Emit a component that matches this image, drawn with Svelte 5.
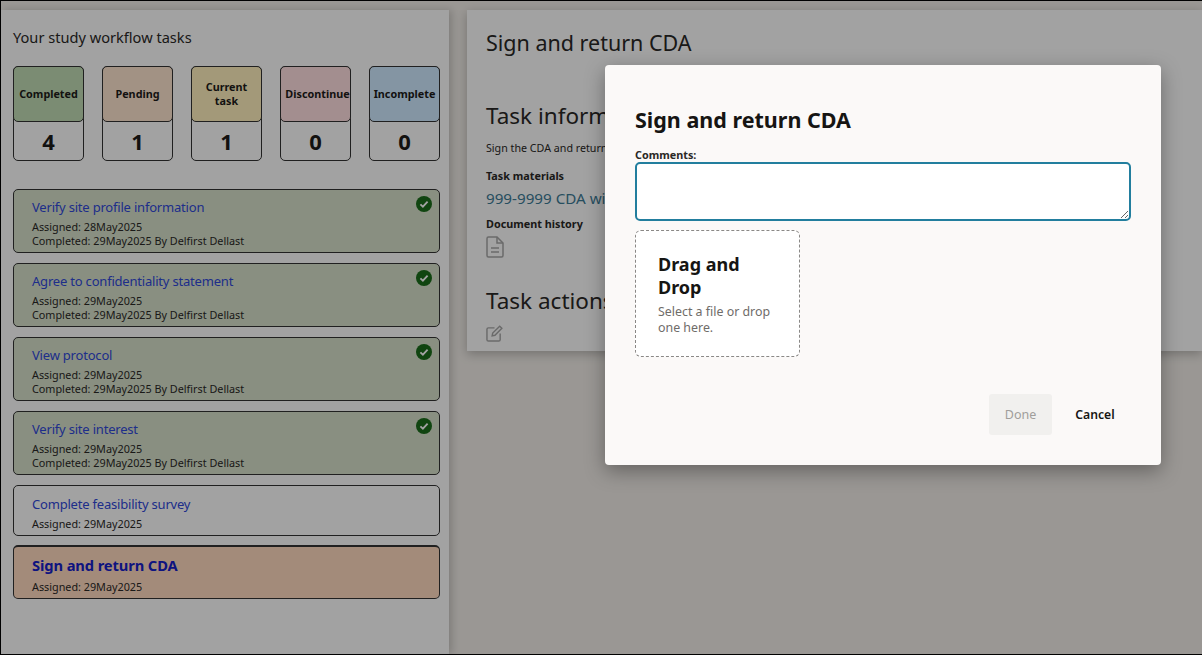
<script>
  const stats = [
    { label: 'Completed', value: 4, tone: 'green' },
    { label: 'Pending', value: 1, tone: 'peach' },
    { label: 'Current task', value: 1, tone: 'yellow' },
    { label: 'Discontinue', value: 0, tone: 'pink' },
    { label: 'Incomplete', value: 0, tone: 'blue' }
  ];
  const tasks = [
    { title: 'Verify site profile information', assigned: '28May2025', done: true },
    { title: 'Agree to confidentiality statement', assigned: '29May2025', done: true },
    { title: 'View protocol', assigned: '29May2025', done: true },
    { title: 'Verify site interest', assigned: '29May2025', done: true },
    { title: 'Complete feasibility survey', assigned: '29May2025', done: false },
    { title: 'Sign and return CDA', assigned: '29May2025', done: false, current: true }
  ];
</script>

<div class="frame">
  <div class="page">
    <aside class="left">
      <h2>Your study workflow tasks</h2>
      <div class="stats">
        {#each stats as s}
          <div class="stat">
            <div class="stat-head {s.tone}">{s.label}</div>
            <div class="stat-value">{s.value}</div>
          </div>
        {/each}
      </div>
      <div class="tasks">
        {#each tasks as t}
          <div class="task" class:done={t.done} class:current={t.current}>
            <div class="task-title">{t.title}</div>
            <div class="meta">Assigned: {t.assigned}</div>
            {#if t.done}
              <div class="meta">Completed: 29May2025 By Delfirst Dellast</div>
              <svg class="check" viewBox="0 0 16 16" width="16" height="16">
                <circle cx="8" cy="8" r="8" fill="#1a6c1a" />
                <path d="M4.400 8.300l2.500 2.400 4.700-5" fill="none" stroke="#fff" stroke-width="1.800" />
              </svg>
            {/if}
          </div>
        {/each}
      </div>
    </aside>
    <main class="right">
      <h1>Sign and return CDA</h1>
      <h3 class="info">Task information</h3>
      <p class="desc">Sign the CDA and return it to the sponsor for review.</p>
      <div class="label first">Task materials</div>
      <div class="link">999-9999 CDA with sponsor</div>
      <div class="label second">Document history</div>
      <svg class="doc" viewBox="0 0 18 22" width="18" height="22" fill="none" stroke="#a6a6a6" stroke-width="1.500">
        <path d="M2.500 1h8.500l6 6v12.500a1.500 1.500 0 0 1-1.500 1.500h-13a1.500 1.500 0 0 1-1.500-1.500v-17a1.500 1.500 0 0 1 1.500-1.500z" />
        <path d="M11 1v6h6M5 12h8M5 16h8" />
      </svg>
      <h3 class="actions">Task actions</h3>
      <svg class="edit" viewBox="0 0 18 18" width="17" height="17" fill="none" stroke="#a6a6a6" stroke-width="1.500">
        <path d="M9 3H2.500A1.500 1.500 0 0 0 1 4.500v11A1.500 1.500 0 0 0 2.500 17h11a1.500 1.500 0 0 0 1.500-1.500V9" />
        <path d="M6.500 11.500l.6-3L14.500 1.200l2.300 2.300L9.500 10.900z" />
      </svg>
    </main>
  </div>
  <div class="scrim"></div>
  <div class="modal">
    <h4>Sign and return CDA</h4>
    <label class="c-label" for="comments">Comments:</label>
    <textarea id="comments"></textarea>
    <div class="drop">
      <div class="drop-title">Drag and Drop</div>
      <div class="drop-sub">Select a file or drop one here.</div>
    </div>
    <div class="buttons">
      <button class="btn-done" disabled>Done</button>
      <button class="btn-cancel">Cancel</button>
    </div>
  </div>
</div>

<style>
  :global(body) { margin: 0; }
  .frame {
    position: relative;
    width: 1202px;
    height: 655px;
    box-sizing: border-box;
    overflow: hidden;
    border: solid #000;
    border-width: 1px 0 1px 1px;
    font-family: "Noto Sans", "Open Sans", sans-serif;
    color: #2a2826;
    background: #f1ede8;
  }
  .page {
    display: flex;
    align-items: flex-start;
    gap: 18px;
    padding-top: 9px;
    height: 100%;
    box-sizing: border-box;
  }
  .left {
    width: 448px;
    height: 644px;
    flex: none;
    box-sizing: border-box;
    padding: 17px 9px 0 12px;
    background: #fdfdfd;
    box-shadow: 3px 0 8px rgba(0, 0, 0, 0.18);
  }
  h2 { margin: 0; font-size: 14.600px; font-weight: 400; line-height: 20px; }
  .stats { display: flex; gap: 18px; margin-top: 19px; }
  .stat {
    width: 71px;
    height: 95px;
    box-sizing: border-box;
    border: 1px solid #333;
    border-radius: 5px;
    background: #fdfdfd;
  }
  .stat-head {
    height: 56px;
    box-sizing: border-box;
    margin: -1px -1px 0;
    border: 1px solid #333;
    border-radius: 5px;
    display: flex;
    align-items: center;
    justify-content: center;
    text-align: center;
    font-size: 10.800px;
    font-weight: 700;
    line-height: 14px;
    color: #1d1b19;
  }
  .green { background: #c1dcb4; }
  .peach { background: #fde4cf; }
  .yellow { background: #fff0bd; padding: 0 10px; }
  .pink { background: #ffdfe0; padding-left: 4px; }
  .blue { background: #cfe9ff; }
  .stat-value { text-align: center; font-size: 22px; font-weight: 700; line-height: 38px; color: #1d1b19; }
  .tasks { display: flex; flex-direction: column; gap: 10px; margin-top: 28px; }
  .task {
    position: relative;
    box-sizing: border-box;
    width: 427px;
    padding: 9px 18px 0;
    min-height: 51px;
    border: 1px solid #333;
    border-radius: 5px;
    background: #fdfdfd;
  }
  .task.done { height: 64px; padding-top: 8px; background: #d6e0ca; }
  .task.current { height: 54px; margin-top: -1px; background: #ffd9bf; border-top-width: 2px; padding-top: 8px; }
  .task-title { font-size: 13px; letter-spacing: -0.2px; line-height: 18px; color: #3048d8; margin-bottom: 4px; }
  .task.current .task-title { font-size: 14.700px; letter-spacing: -0.1px; font-weight: 700; color: #1520c8; line-height: 21px; }
  .meta { font-size: 10.800px; line-height: 14px; }
  .check { position: absolute; top: 6px; right: 7px; }
  .right {
    flex: 1;
    height: 341px;
    box-sizing: border-box;
    padding: 19px 19px;
    background: #fdfdfd;
    box-shadow: 0 3px 10px rgba(0, 0, 0, 0.25);
    white-space: nowrap;
    overflow: hidden;
  }
  h1 { margin: 0; font-size: 21.500px; font-weight: 400; line-height: 28px; }
  h3 { margin: 0; font-size: 22.500px; font-weight: 400; line-height: 28px; }
  .info { margin-top: 45px; }
  .desc { margin: 10px 0 0; font-size: 10.700px; line-height: 16px; }
  .label { font-size: 10.800px; font-weight: 700; line-height: 14px; }
  .label.first { margin-top: 13px; }
  .link { font-size: 15.200px; line-height: 20px; margin-top: 5px; color: #3c7a95; }
  .label.second { margin-top: 9px; }
  .doc { display: block; margin-top: 5px; }
  .actions { margin-top: 29px; }
  .edit { display: block; margin-top: 10px; }
  .scrim { position: absolute; inset: 0; background: rgba(0, 0, 0, 0.36); }
  .modal {
    position: absolute;
    left: 604px;
    top: 64px;
    width: 556px;
    height: 400px;
    box-sizing: border-box;
    padding: 41px 30px 0;
    border-radius: 4px;
    background: #fbf9f8;
    box-shadow: 0 6px 20px rgba(0, 0, 0, 0.35);
  }
  h4 { margin: 0; font-size: 21.500px; font-weight: 700; line-height: 28px; color: #161513; }
  .c-label { display: block; margin-top: 14px; font-size: 10.800px; font-weight: 700; line-height: 14px; }
  textarea {
    display: block;
    width: 496px;
    height: 59px;
    box-sizing: border-box;
    margin: 0;
    border: 2px solid #227e9e;
    border-radius: 5px;
    background: #fff;
    outline: none;
  }
  .drop {
    width: 165px;
    height: 127px;
    box-sizing: border-box;
    margin-top: 9px;
    padding: 22px 22px 0;
    border: 1px dashed #8a8886;
    border-radius: 6px;
    background: #fff;
  }
  .drop-title { font-size: 18px; font-weight: 700; line-height: 23px; color: #161513; }
  .drop-sub { margin-top: 5px; font-size: 12.400px; line-height: 16px; color: #6f6c69; }
  .buttons {
    display: flex;
    justify-content: flex-end;
    align-items: center;
    gap: 8px;
    margin-top: 37px;
    margin-right: 1px;
  }
  button { height: 41px; border: 0; border-radius: 3px; font: inherit; font-size: 12.500px; padding: 0; }
  .btn-done { width: 63px; background: #f1f0ee; color: #a09e9b; }
  .btn-cancel { width: 70px; background: transparent; color: #161513; font-weight: 600; font-size: 12.200px; }
</style>
